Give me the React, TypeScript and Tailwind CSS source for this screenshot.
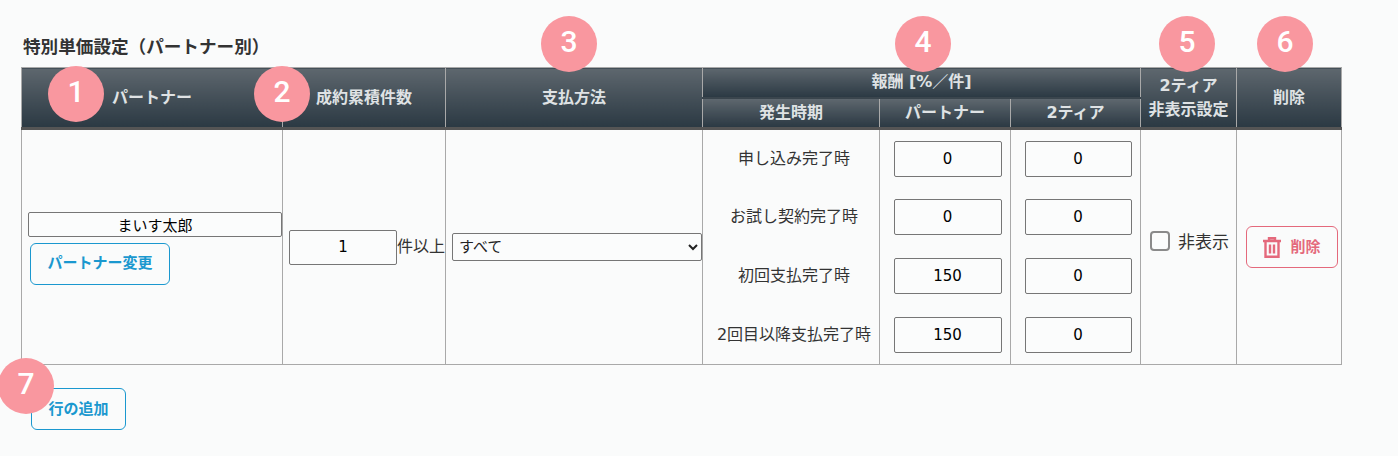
import React from "react";

const th = "border border-[#a9a9a9] border-b-[3px] border-b-[#555555] bg-gradient-to-b from-[#5e676e] to-[#2b3943] text-[#dfe2e4] text-[16px] font-bold p-0 text-center align-middle";
const sub = "border border-[#a9a9a9] bg-gradient-to-b from-[#5e676e] to-[#2b3943] text-[#dfe2e4] text-[16px] font-bold p-0 text-center align-middle";
const td = "border border-[#a9a9a9] p-0 text-[16px] text-[#333333]";
const tdMid = "border-x border-x-[#a9a9a9] p-0 text-[16px] text-[#333333]";
const input = "border border-[#767676] rounded-[2px] bg-[#fbfcfc] text-center text-[15px] text-black outline-none";

function Badge({ n, className }: { n: number; className: string }) {
  return (
    <div className={"absolute w-[56px] h-[56px] rounded-full bg-[#f9979f] text-white text-[30px] leading-[52px] text-center font-['Roboto',sans-serif] font-medium " + className}>
      {n}
    </div>
  );
}

const rows = [
  ["申し込み完了時", "0", "0"],
  ["お試し契約完了時", "0", "0"],
  ["初回支払完了時", "150", "0"],
  ["2回目以降支払完了時", "150", "0"],
];

export default function App() {
  return (
    <div className="relative w-[1398px] h-[456px] bg-[#fafbfb] overflow-hidden pt-[38px] pl-[21px] text-[#333333] font-['DejaVu_Sans','Noto_Sans_CJK_JP',sans-serif]">
      <h2 className="text-[17.6px] leading-[18px] font-bold ml-[2px] mb-[11px] text-[#333333]">特別単価設定（パートナー別）</h2>
      <table className="border-collapse table-fixed w-[1320px]">
        <colgroup>
          <col className="w-[261px]" />
          <col className="w-[163px]" />
          <col className="w-[257px]" />
          <col className="w-[177px]" />
          <col className="w-[131px]" />
          <col className="w-[130px]" />
          <col className="w-[96px]" />
          <col className="w-[105px]" />
        </colgroup>
        <thead>
          <tr className="h-[30px]">
            <th rowSpan={2} className={th}>パートナー</th>
            <th rowSpan={2} className={th}>成約累積件数</th>
            <th rowSpan={2} className={th}>支払方法</th>
            <th colSpan={3} className={sub + " border-b-[2px] border-b-[#3a454d]"}>報酬 [%／件]</th>
            <th rowSpan={2} className={th + " leading-[24px]"}>2ティア<br />非表示設定</th>
            <th rowSpan={2} className={th}>削除</th>
          </tr>
          <tr className="h-[31px]">
            <th className={th}>発生時期</th>
            <th className={th}>パートナー</th>
            <th className={th}>2ティア</th>
          </tr>
        </thead>
        <tbody>
          {rows.map((r, i) => (
            <tr key={i} className="h-[59px]">
              {i === 0 && (
                <>
                  <td rowSpan={4} className={td}>
                    <div className="flex flex-col items-start pl-[6px] pt-[2px]">
                      <input readOnly value="まいす太郎" className={input + " w-[254px] h-[25px] text-[14px]"} />
                      <button className="mt-[6px] ml-[2px] w-[140px] h-[42px] rounded-[6px] border border-[#1a98cf] text-[#1a98cf] text-[15px] font-bold">パートナー変更</button>
                    </div>
                  </td>
                  <td rowSpan={4} className={td}>
                    <div className="flex items-center pl-[6px]">
                      <input readOnly value="1" className={input + " w-[108px] h-[35px]"} />
                      <span className="whitespace-nowrap text-[16px]">件以上</span>
                    </div>
                  </td>
                  <td rowSpan={4} className={td}>
                    <div className="flex pl-[6px]">
                      <select className="w-[250px] h-[28px] border border-[#767676] rounded-[2px] bg-[#fbfcfc] text-[15px] text-[#222222] pl-[2px]">
                        <option>すべて</option>
                      </select>
                    </div>
                  </td>
                </>
              )}
              <td className={tdMid + " text-center whitespace-nowrap pl-[6px]"}>{r[0]}</td>
              <td className={tdMid}>
                <div className="flex justify-center pl-[5px]">
                  <input readOnly value={r[1]} className={input + " w-[108px] h-[36px]"} />
                </div>
              </td>
              <td className={tdMid}>
                <div className="flex justify-center pl-[5px]">
                  <input readOnly value={r[2]} className={input + " w-[107px] h-[36px]"} />
                </div>
              </td>
              {i === 0 && (
                <>
                  <td rowSpan={4} className={td}>
                    <label className="flex items-center pl-[9px] pb-[8px] gap-[8px] whitespace-nowrap">
                      <input type="checkbox" className="appearance-none w-[20px] h-[20px] mb-[4px] border-2 border-[#8a8a8a] rounded-[4px] bg-[#fbfcfc]" />
                      <span className="text-[17px]">非表示</span>
                    </label>
                  </td>
                  <td rowSpan={4} className={td}>
                    <div className="flex justify-center pl-[5px]">
                      <button className="w-[92px] h-[42px] rounded-[6px] border border-[#e4697c] text-[#e4697c] text-[15px] font-bold flex items-center justify-center gap-[10px]">
                        <svg width="18" height="21" viewBox="0 0 18 21" fill="none" stroke="#e4697c" strokeWidth="2.4">
                          <path d="M0 4h18M6 4V1.2h6V4M2.5 4v15.8h13V4M7 7.5v9M11 7.5v9" />
                        </svg>
                        削除
                      </button>
                    </div>
                  </td>
                </>
              )}
            </tr>
          ))}
          <tr className="h-0"><td colSpan={8} className="border-t border-t-[#a9a9a9] p-0"></td></tr>
        </tbody>
      </table>
      <button className="mt-[23px] ml-[10px] w-[95px] h-[42px] rounded-[6px] border border-[#1a98cf] text-[#1a98cf] text-[15px] font-bold">行の追加</button>

      <Badge n={1} className="left-[48px] top-[66px]" />
      <Badge n={2} className="left-[254px] top-[66px]" />
      <Badge n={3} className="left-[541px] top-[16px]" />
      <Badge n={4} className="left-[895px] top-[16px]" />
      <Badge n={5} className="left-[1159px] top-[16px]" />
      <Badge n={6} className="left-[1257px] top-[16px]" />
      <Badge n={7} className="left-[-2px] top-[358px]" />
    </div>
  );
}
